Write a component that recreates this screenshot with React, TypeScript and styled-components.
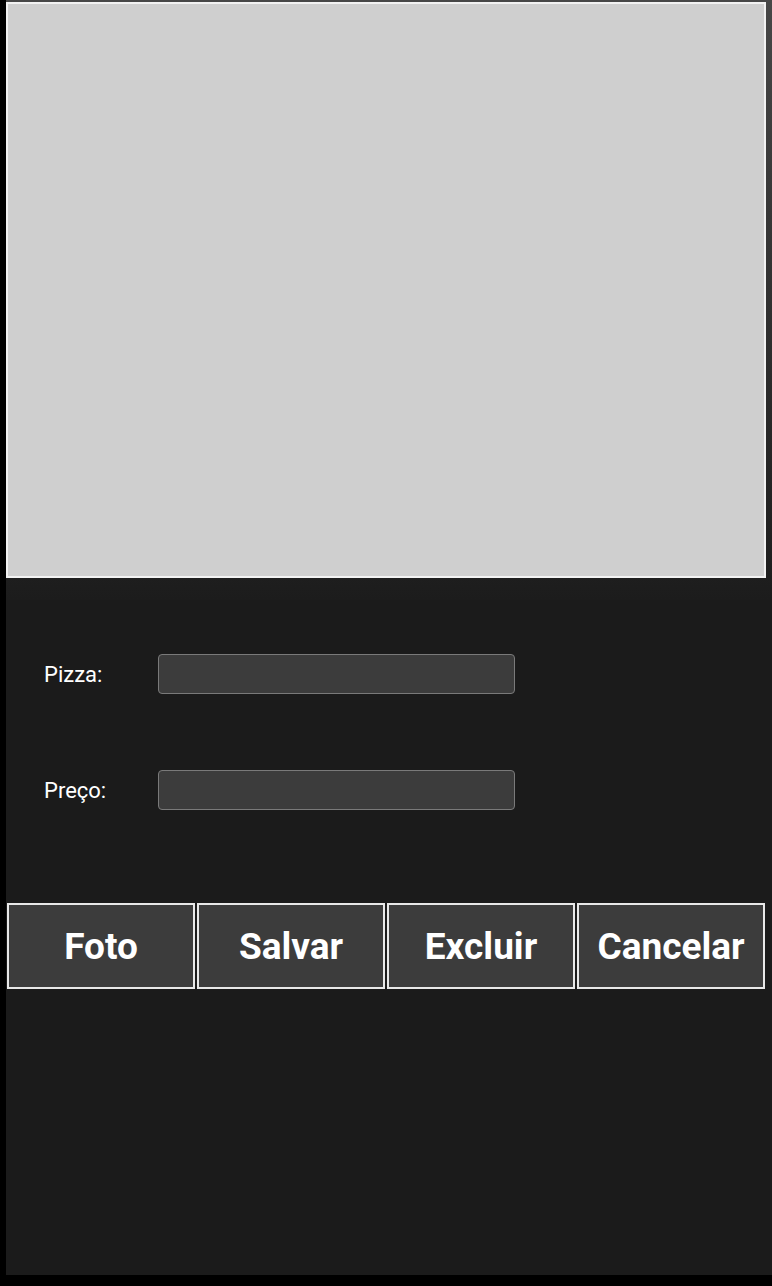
import React from "react";
import styled, { createGlobalStyle } from "styled-components";

const GlobalStyle = createGlobalStyle`
  html, body {
    margin: 0;
    padding: 0;
    background: #000;
  }
  body {
    font-family: Roboto, "Noto Sans", Arial, sans-serif;
  }
  * { box-sizing: border-box; }
`;

const Screen = styled.div`
  margin-left: 6px;
  width: 766px;
  height: 1275px;
  background: #1b1b1b;
  display: flex;
  flex-direction: column;
  overflow: hidden;
`;

const PhotoSection = styled.div`
  height: 600px;
  padding: 2px 6px 0 0;
  background: linear-gradient(180deg, #474747 0%, #333 45%, #202020 92%, #1c1c1c 100%);
`;

const Photo = styled.div`
  width: 760px;
  height: 576px;
  border: 2px solid #f2f2f2;
  background: #cfcfcf;
`;

const Form = styled.div`
  display: flex;
  flex-direction: column;
  gap: 76px;
  padding: 54px 0 0 38px;
`;

const Row = styled.div`
  display: flex;
  align-items: center;
  height: 40px;
`;

const Label = styled.label`
  width: 114px;
  color: #fff;
  font-size: 22px;
  font-family: Roboto, "Noto Sans", sans-serif;
`;

const Input = styled.input`
  width: 357px;
  height: 40px;
  border: 1px solid #7a7a7a;
  border-radius: 4px;
  background: #3c3c3c;
  color: #fff;
  font-size: 18px;
  padding: 0 10px;
  outline: none;
`;

const ButtonRow = styled.div`
  display: flex;
  margin-top: 92px;
  width: 760px;
`;

const ActionButton = styled.button`
  flex: 1;
  margin: 1px;
  height: 86px;
  border: 2px solid #e8e8e8;
  background: #3c3c3c;
  color: #fff;
  font-family: Roboto, "Noto Sans", sans-serif;
  font-weight: 700;
  font-size: 37px;
  padding: 0;
  cursor: pointer;
`;

export default function App() {
  return (
    <>
      <GlobalStyle />
      <Screen>
        <PhotoSection>
          <Photo />
        </PhotoSection>
        <Form>
          <Row>
            <Label>Pizza:</Label>
            <Input type="text" />
          </Row>
          <Row>
            <Label>Preço:</Label>
            <Input type="text" />
          </Row>
        </Form>
        <ButtonRow>
          <ActionButton>Foto</ActionButton>
          <ActionButton>Salvar</ActionButton>
          <ActionButton>Excluir</ActionButton>
          <ActionButton>Cancelar</ActionButton>
        </ButtonRow>
      </Screen>
    </>
  );
}
